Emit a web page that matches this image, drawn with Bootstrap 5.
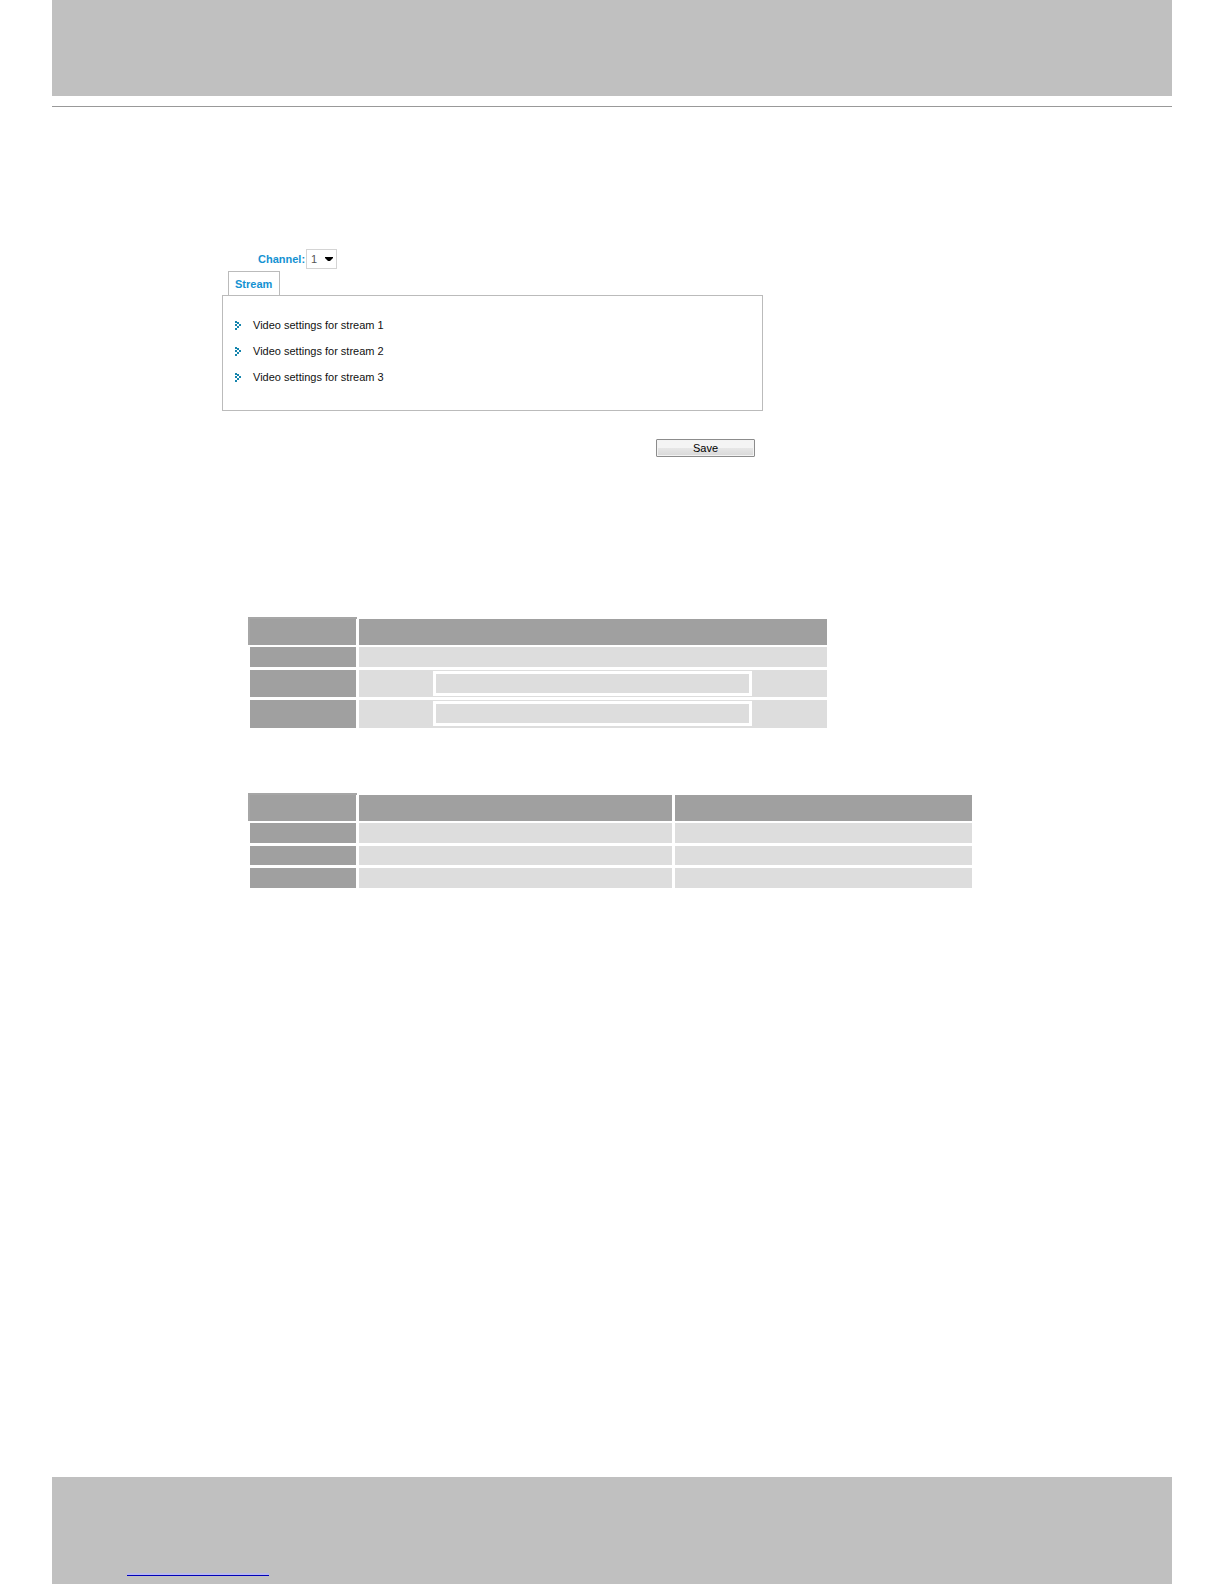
<!DOCTYPE html>
<html lang="en">
<head>
<meta charset="utf-8">
<meta name="viewport" content="width=device-width, initial-scale=1">
<title>Stream settings</title>
<link href="https://cdn.jsdelivr.net/npm/bootstrap@5.3.0/dist/css/bootstrap.min.css" rel="stylesheet">
<style>
body { font: 11px/16px "Liberation Sans", Arial, sans-serif; color: #000; background: #fff; }
.page-wrap { padding: 0 52px; }
.band { background: #c0c0c0; }
.band-top { height: 96px; }
.band-bottom { height: 107px; padding: 0 75px 8px; }
.top-rule { margin-top: 10px; height: 1px; background: #999; }
.content-area { padding: 142px 170px 0; }
.stream-block { width: 100%; max-width: 541px; }
.accent { color: #1492d2; font-weight: bold; }
.channel-row { padding-left: 36px; gap: 1px; }
.channel-select { width: 31px; height: 20px; padding: 0 4px; font-size: 11px; line-height: 18px; color: #555; border: 1px solid #d4d4d4; border-radius: 0; appearance: none;
  background: #fff url("data:image/svg+xml,%3Csvg xmlns='http://www.w3.org/2000/svg' viewBox='0 0 8 5'%3E%3Cpath d='M0 0h8v1L5 4H3L0 1z'/%3E%3C/svg%3E") no-repeat right 3px center / 8px 5px; }
.stream-tab { display: block; width: 52px; height: 24px; margin: 2px 0 0 6px; padding: 0 0 0 6px; border: 1px solid #bbb; border-bottom: 0; border-radius: 0; background: #fff; line-height: 24px; text-align: left; }
.stream-panel { border: 1px solid #bbb; padding: 21px 12px 25px; }
.stream-panel li { height: 26px; }
.stream-panel li:last-child { height: 16px; }
.stream-panel a { color: #111; gap: 10px; line-height: 16px; }
.stream-panel svg { width: 8px; height: 9px; }
.save-btn { width: 99px; height: 18px; margin: 28px 8px 0 0; padding: 0; border: 1px solid #8c8c8c; border-radius: 1px; font-size: 11px; line-height: 15px; color: #000; background: linear-gradient(#f4f4f4 0 48%, #e6e6e6 52%, #d8d8d8); box-shadow: inset 0 0 0 1px #f3f3f3; }
.grid-table { width: 100%; margin-left: 28px; border-collapse: separate; border-spacing: 0; table-layout: fixed; }
.grid-one { max-width: 580px; margin-top: 162px; }
.grid-two { max-width: 725px; margin-top: 64px; }
.grid-table th, .grid-table td { padding: 0; border: 0 solid #fff; border-right-width: 3px; border-bottom-width: 3px; background: #ddd; vertical-align: top; }
.grid-table th { background: #a0a0a0; }
.grid-table thead th { height: 28px; border-bottom-width: 2px; }
.grid-table thead th:first-child { box-shadow: -2px -2px 0 #a6a6a6; }
.h-slim { height: 22px; }
.h-base { height: 23px; }
.h-mid { height: 30px; }
.h-tall { height: 31px; }
.col-first { width: 109px; }
.col-mid { width: 316px; }
.inner-frame { height: 25px; margin: 1px 75px 0 74px; border: 3px solid #fff; }
.foot-link { width: 142px; height: 3px; background: #b9b9ea; border-bottom: 1px solid #0000b8; }
</style>
<script src="https://cdn.jsdelivr.net/npm/bootstrap@5.3.0/dist/js/bootstrap.bundle.min.js"></script>
</head>
<body>
<div class="page-wrap d-flex flex-column min-vh-100">
  <header>
    <div class="band band-top"></div>
    <div class="top-rule"></div>
  </header>
  <main class="content-area">
    <form class="stream-block">
      <div class="channel-row d-flex align-items-center">
        <label class="accent" for="channel">Channel:</label>
        <select class="channel-select" id="channel"><option>1</option></select>
      </div>
      <button type="button" class="stream-tab accent">Stream</button>
      <section class="stream-panel">
        <ul class="list-unstyled m-0">
          <li><a class="d-flex align-items-center text-decoration-none" href="#"><svg viewBox="0 0 8 9" fill="#1685ad" aria-hidden="true"><path d="M0 0h2v2H0zM2 1h2v2H2zM4 3h2v2H4zM2 5h2v2H2zM0 7h2v2H0zM0 3h2v2H0z"/></svg><span>Video settings for stream 1</span></a></li>
          <li><a class="d-flex align-items-center text-decoration-none" href="#"><svg viewBox="0 0 8 9" fill="#1685ad" aria-hidden="true"><path d="M0 0h2v2H0zM2 1h2v2H2zM4 3h2v2H4zM2 5h2v2H2zM0 7h2v2H0zM0 3h2v2H0z"/></svg><span>Video settings for stream 2</span></a></li>
          <li><a class="d-flex align-items-center text-decoration-none" href="#"><svg viewBox="0 0 8 9" fill="#1685ad" aria-hidden="true"><path d="M0 0h2v2H0zM2 1h2v2H2zM4 3h2v2H4zM2 5h2v2H2zM0 7h2v2H0zM0 3h2v2H0z"/></svg><span>Video settings for stream 3</span></a></li>
        </ul>
      </section>
      <div class="d-flex justify-content-end">
        <button type="button" class="save-btn">Save</button>
      </div>
    </form>
    <table class="grid-table grid-one">
      <colgroup><col class="col-first"><col></colgroup>
      <thead><tr><th></th><th></th></tr></thead>
      <tbody>
        <tr class="h-base"><th></th><td></td></tr>
        <tr class="h-mid"><th></th><td><div class="inner-frame"></div></td></tr>
        <tr class="h-tall"><th></th><td><div class="inner-frame"></div></td></tr>
      </tbody>
    </table>
    <table class="grid-table grid-two">
      <colgroup><col class="col-first"><col class="col-mid"><col></colgroup>
      <thead><tr><th></th><th></th><th></th></tr></thead>
      <tbody>
        <tr class="h-base"><th></th><td></td><td></td></tr>
        <tr class="h-slim"><th></th><td></td><td></td></tr>
        <tr class="h-base"><th></th><td></td><td></td></tr>
      </tbody>
    </table>
  </main>
  <footer class="band band-bottom mt-auto d-flex align-items-end">
    <a class="foot-link" href="#"></a>
  </footer>
</div>
</body>
</html>
